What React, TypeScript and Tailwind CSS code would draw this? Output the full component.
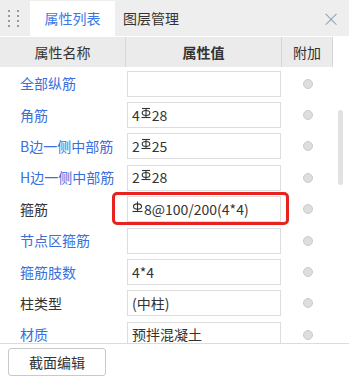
import React from 'react';

const Grade3 = () => (
  <svg width="10" height="12" viewBox="0 0 10 12" className="inline-block -mt-[5px] mx-[1px]">
    <line x1="1" y1="1.5" x2="9" y2="1.5" stroke="#333" strokeWidth="1.1" />
    <line x1="5" y1="1.5" x2="5" y2="10.5" stroke="#333" strokeWidth="1.1" />
    <ellipse cx="5" cy="6" rx="3.8" ry="2.5" fill="none" stroke="#333" strokeWidth="1.1" />
    <line x1="0.5" y1="10.5" x2="9.5" y2="10.5" stroke="#333" strokeWidth="1.1" />
  </svg>
);

const Grade1 = () => (
  <svg width="11" height="12" viewBox="0 0 11 12" className="inline-block -mt-[5px] mr-[1px]">
    <line x1="5.5" y1="0.5" x2="5.5" y2="10.5" stroke="#333" strokeWidth="1.1" />
    <ellipse cx="5.5" cy="5.5" rx="4" ry="2.6" fill="none" stroke="#333" strokeWidth="1.1" />
    <line x1="0.5" y1="10.5" x2="10.5" y2="10.5" stroke="#333" strokeWidth="1.1" />
  </svg>
);

interface Row {
  name: string;
  blue: boolean;
  value?: React.ReactNode;
  marked?: boolean;
}

const rows: Row[] = [
  { name: '全部纵筋', blue: true },
  { name: '角筋', blue: true, value: <>4<Grade3 />28</> },
  { name: 'B边一侧中部筋', blue: true, value: <>2<Grade3 />25</> },
  { name: 'H边一侧中部筋', blue: true, value: <>2<Grade3 />28</> },
  { name: '箍筋', blue: false, value: <><Grade1 />8@100/200(4*4)</>, marked: true },
  { name: '节点区箍筋', blue: true },
  { name: '箍筋肢数', blue: true, value: '4*4' },
  { name: '柱类型', blue: false, value: '(中柱)' },
  { name: '材质', blue: true, value: '预拌混凝土' },
];

const App: React.FC = () => {
  return (
    <div className="w-[349px] h-[382px] bg-white font-['Noto_Sans_CJK_SC',sans-serif] text-[14px] text-[#333] overflow-hidden">
      {/* tab bar */}
      <div className="flex h-[36px] bg-[#eeeeee] items-stretch">
        <div className="w-[30px] grid grid-cols-2 gap-x-[3px] gap-y-[3px] content-center justify-center px-[8px]">
          {[0, 1, 2, 3, 4, 5, 6, 7].map((i) => (
            <span key={i} className="w-[2px] h-[2px] bg-[#9a9a9a]" />
          ))}
        </div>
        <div className="mt-[1px] w-[85px] bg-white flex items-center justify-center text-[#3a78e6]">
          属性列表
        </div>
        <div className="w-[72px] flex items-center justify-center text-[#333]">图层管理</div>
        <div className="flex-1" />
        <div className="w-[36px] flex items-center justify-center text-[#9a9a9a] text-[18px] font-light">
          ×
        </div>
      </div>

      {/* table header */}
      <div className="flex h-[31px] border-t border-white">
        <div className="w-[126px] bg-[#ebebeb] border-r border-[#d6d6d6] flex items-center justify-center">
          属性名称
        </div>
        <div className="w-[156px] bg-[#ebebeb] border-r border-[#d6d6d6] flex items-center justify-center font-bold">
          属性值
        </div>
        <div className="w-[51px] bg-[#ebebeb] border-r border-[#d6d6d6] flex items-center justify-center">
          附加
        </div>
        <div className="flex-1 bg-white" />
      </div>

      {/* table body */}
      <div className="relative h-[277px] overflow-hidden border-b border-[#dcdcdc] pt-[1px]">
        {rows.map((r) => (
          <div key={r.name} className="relative flex h-[31.4px] items-center">
            <div className={`w-[126px] pl-[20px] whitespace-nowrap ${r.blue ? 'text-[#3a6fdc]' : 'text-[#333]'}`}>
              {r.name}
            </div>
            <div className="w-[156px] pl-[1px]">
              <div className="w-[154px] h-[26px] border border-[#dddddd] pl-[4px] flex items-center whitespace-nowrap">
                {r.value}
              </div>
            </div>
            <div className="w-[51px] flex justify-center">
              <span className="w-[10px] h-[10px] rounded-full bg-[#dedede] border border-[#cbcbcb]" />
            </div>
            {r.marked && (
              <div className="absolute left-[112px] top-[-2px] w-[177px] h-[33px] border-[3px] border-[#e8231f] rounded-[5px]" />
            )}
          </div>
        ))}
        <div className="absolute left-[338px] top-[43px] w-[5px] h-[75px] rounded-full bg-[#e2e2e2]" />
      </div>

      {/* footer */}
      <div className="px-[8px] pt-[4px]">
        <button className="w-[98px] h-[28px] border border-[#c9c9c9] rounded-[3px] bg-white text-[#333] text-[14px]">
          截面编辑
        </button>
      </div>
    </div>
  );
};

export default App;
